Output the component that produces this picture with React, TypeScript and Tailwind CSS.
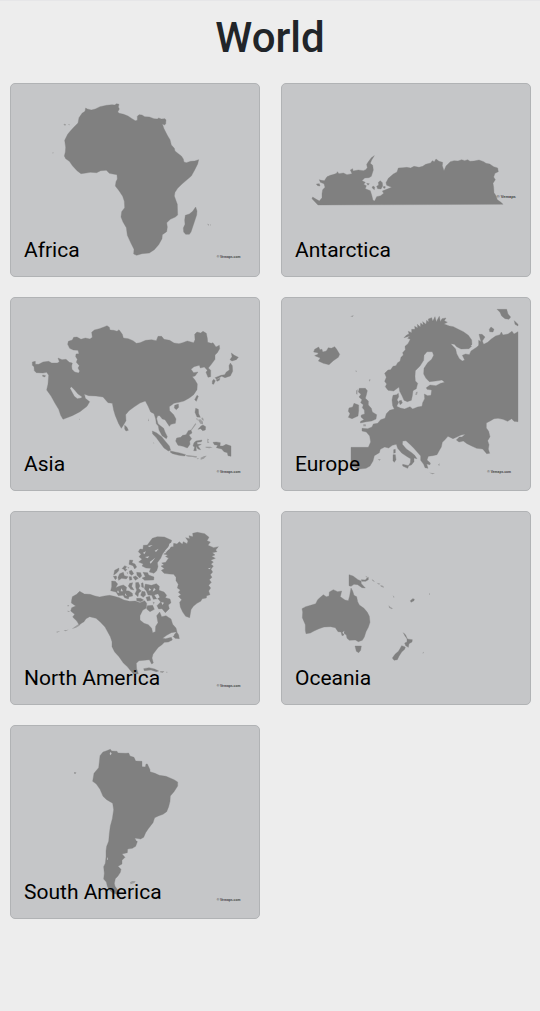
type Region = {
  name: string;
  slug: string;
  viewBox: string;
  land: string;
  faint?: string;
  water?: string;
  credit?: { x: number; y: number; text: string };
};

const leftBox = "9 12 744 576";
const rightBox = "12 12 744 576";
const cornerCredit = { x: 626, y: 536, text: "© Vemaps.com" };

const regions: Region[] = [
  {
    name: "Africa",
    slug: "africa",
    viewBox: leftBox,
    credit: { x: 626, y: 535, text: "© Vemaps.com" },
    land:
      "M233 84L238 87L250 90L262 87L276 80L296 76L312 74L320 75L326 71L333 73L331 81L334 87L329 96L334 100L347 103L360 108L372 116L382 122L388 121L388 109L393 104L402 105L410 110L424 111L438 116L448 117L452 114L460 117L471 116L474 120L473 132L469 135L463 131L468 146L478 166L486 179L490 195L499 205L501 213L511 221L520 228L526 237L528 246L535 248L548 244L560 243L572 239L569 252L560 270L550 288L535 301L522 312L509 325L501 337L499 348L503 359L508 373L509 405L502 411L487 418L476 428L478 441L476 455L463 464L462 476L452 494L439 509L424 519L402 521L386 526L377 522L378 508L369 490L358 466L355 443L345 426L339 411L341 395L350 383L349 364L344 349L333 332L322 318L324 305L328 297L327 284L315 282L304 280L295 271L278 272L266 278L247 277L234 279L219 281L207 272L194 258L184 244L173 236L169 228L172 216L173 202L170 181L179 163L187 153L198 141L210 129L213 113L222 100L231 94Z M563 381L567 393L566 405L561 420L555 438L549 456L544 463L533 463L527 456L526 444L531 433L530 420L532 406L544 402L554 394Z",
    faint:
      "M168 131L174 133L172 137L167 135Z M180 134L184 132L185 136Z M598 431L603 433L601 438Z M606 433L609 434L608 438Z M134 216L137 218L134 221Z",
  },
  {
    name: "Antarctica",
    slug: "antarctica",
    viewBox: rightBox,
    credit: { x: 656, y: 354, text: "© Vemaps" },
    land:
      "M120 375L112 367L102 356L104 351L115 358L124 363L132 353L132 341L134 329L141 322L138 311L127 307L124 299L130 301L139 302L147 290L157 286L168 283L176 280L178 275L183 281L196 279L207 284L222 281L217 270L224 266L225 273L241 270L256 272L263 269L268 263L266 253L272 244L280 233L289 227L281 240L277 250L284 256L286 270L280 289L273 293L260 294L252 302L262 307L257 313L265 317L262 326L277 332L281 345L285 361L290 363L296 350L308 347L317 340L313 333L326 328L341 322L326 316L324 308L331 295L346 282L357 276L361 264L375 263L386 262L398 264L408 259L423 262L434 259L443 253L458 249L463 242L469 245L474 237L483 244L494 247L493 257L498 272L504 258L517 245L528 242L540 243L551 239L560 242L569 239L576 244L588 243L603 240L617 245L624 250L635 252L647 260L659 264L661 275L651 280L647 291L652 299L645 310L647 322L648 338L654 347L658 359L669 367L675 373Z M301 307L307 302L313 308L314 318L309 327L299 326L296 319L302 315Z M115 312L124 311L126 318L119 317Z M285 318L290 321L289 329L282 323Z M266 310L274 311L270 316Z M317 319L322 320L321 325L316 324Z",
    water: "M268 319L276 317L280 328L272 327Z M276 301L281 301L280 307Z",
  },
  {
    name: "Asia",
    slug: "asia",
    viewBox: leftBox,
    credit: cornerCredit,
    land:
      "M73 204L82 202L82 211L92 211L105 204L122 202L131 207L148 207L154 203L150 192L162 197L174 196L184 205L193 207L191 216L192 226L200 234L212 237L215 231L210 222L214 215L205 205L208 196L203 188L204 180L213 179L210 169L196 168L185 163L179 151L181 142L193 138L197 130L207 129L219 136L232 132L246 135L253 130L251 115L259 108L274 104L288 99L297 95L304 100L306 108L317 109L327 112L333 107L343 121L346 132L361 134L375 140L385 148L396 146L413 139L431 137L445 140L450 127L461 127L468 136L485 139L498 147L513 149L524 146L538 141L557 146L561 137L560 121L567 114L578 117L585 112L595 118L598 133L599 145L610 148L615 146L624 159L634 154L635 164L628 176L621 183L621 196L610 211L601 222L608 229L608 248L600 250L594 235L598 229L589 219L577 222L574 214L558 218L549 226L557 236L570 234L561 246L553 248L561 258L568 270L567 287L557 302L544 312L528 321L513 325L498 328L484 338L485 350L497 362L504 375L502 388L489 391L484 397L479 389L471 377L463 375L455 365L449 365L446 374L450 389L458 396L467 403L471 414L478 428L475 434L462 425L453 408L451 396L445 389L443 375L438 359L428 354L420 336L412 321L396 327L378 339L363 350L353 362L354 380L347 392L340 403L332 389L322 365L317 349L313 328L300 326L285 309L264 306L242 305L230 301L224 310L210 300L199 287L190 278L186 283L194 298L199 307L208 314L219 312L230 303L232 313L245 323L237 337L216 353L193 365L165 376L158 364L152 346L141 328L129 306L116 288L120 270L122 244L116 235L105 237L85 236L79 230L78 218L73 214Z M350 394L357 400L361 409L354 411L350 405Z M104 243L113 245L110 249L104 247Z M670 177L679 184L691 190L685 197L672 201L666 197L672 188Z M667 207L673 215L674 232L667 246L651 251L641 247L626 256L621 251L639 244L650 242L655 234L664 228L663 215Z M617 256L622 260L617 271L613 270L613 261Z M625 257L636 253L634 259L627 262Z M567 304L571 307L565 322L560 317Z M500 334L511 330L512 340L505 347L499 342Z M563 343L571 346L572 359L577 370L567 369L561 355Z M585 393L593 398L592 408L584 410L578 404L570 406L579 396Z M549 408L552 417L543 423L551 434L545 442L546 451L538 462L525 457L510 454L503 441L506 432L518 430L524 424L534 422L541 410Z M433 411L445 416L461 428L473 443L484 456L488 469L481 471L468 462L456 446L444 430L434 420Z M488 471L501 474L512 476L523 479L533 482L530 486L513 484L494 479L487 475Z M558 446L564 441L582 438L580 443L567 445L568 451L580 451L570 456L578 467L570 465L564 457L565 470L557 470L560 459L555 456Z M615 445L625 444L637 446L636 456L645 456L654 451L669 456L669 487L660 485L658 476L648 473L641 465L625 461L629 454L619 452Z",
    faint:
      "M570 377L577 376L585 383L585 391L577 389Z M562 388L565 390L551 409L549 407Z M582 370L587 375L586 381L580 375Z M564 373L569 374L568 380Z M535 483L544 484L555 485L567 487L565 491L554 489L541 488L534 486Z M578 491L589 486L596 485L587 494L578 497Z M566 492L574 494L569 496Z M598 434L603 436L600 441L604 446L598 447Z M593 458L607 458L614 460L604 463L593 461Z M213 374L216 375L214 378Z M421 373L423 380L420 382Z M435 443L439 449L436 448Z",
  },
  {
    name: "Europe",
    slug: "europe",
    viewBox: rightBox,
    credit: { x: 628, y: 536, text: "© Vemaps.com" },
    land:
      "M720 113L720 383L708 382L701 374L689 382L675 376L660 373L648 374L638 380L625 387L625 402L632 412L636 428L629 440L633 452L631 465L635 478L626 479L614 465L596 463L581 456L567 449L556 441L543 444L535 438L544 429L552 429L562 421L549 423L535 430L525 434L510 427L500 438L493 445L490 459L483 471L477 482L464 485L451 487L447 498L457 507L456 512L446 510L450 523L441 521L437 511L428 499L428 486L421 478L407 462L394 449L384 440L374 441L373 451L385 465L401 476L410 484L417 494L408 492L408 503L400 513L391 515L397 506L398 494L389 489L371 477L359 463L355 451L343 454L332 462L320 459L307 466L304 476L289 485L285 501L276 516L264 523L244 525L219 516L219 460L271 460L278 444L275 426L265 414L252 411L252 403L269 404L282 399L286 390L299 388L308 377L321 373L325 359L335 349L349 345L344 335L342 318L345 304L356 302L361 298L362 308L357 318L362 325L356 337L367 342L380 345L396 338L404 345L419 339L432 337L434 326L440 314L439 300L449 305L459 304L461 288L447 286L445 281L456 273L474 275L488 268L500 265L492 258L473 261L454 263L444 253L437 240L438 223L449 206L461 196L467 184L463 173L447 173L438 184L437 199L426 216L412 230L411 247L412 261L419 268L415 284L405 290L403 305L400 319L388 323L378 319L372 305L365 292L363 279L347 291L330 289L322 278L326 270L320 262L325 250L320 238L330 228L338 227L345 217L354 215L359 206L366 202L369 190L376 183L374 176L382 167L381 157L390 149L397 136L389 133L396 126L378 131L386 123L393 120L391 112L401 116L401 106L411 106L410 97L419 102L418 91L427 99L428 87L436 94L434 83L444 91L446 79L452 85L451 75L461 71L464 82L471 68L475 84L479 76L484 67L487 83L492 74L504 72L499 80L508 85L498 90L514 96L526 98L541 106L556 113L571 124L581 138L582 155L573 164L549 165L536 158L529 151L518 149L533 165L536 179L544 194L553 201L560 198L553 184L563 180L574 182L579 171L597 159L602 154L602 139L609 143L603 121L612 121L621 129L613 141L617 151L629 145L640 135L653 126L666 122L670 114L675 123L690 120L702 112L708 120Z M110 166L122 159L126 167L132 166L134 174L145 171L151 161L160 163L170 158L176 166L185 181L181 190L166 200L153 212L136 208L121 201L127 192L110 185L121 180L119 176L107 174Z M244 283L262 283L268 290L265 303L262 313L271 321L271 333L280 343L283 354L296 362L294 375L281 381L265 383L247 387L248 382L258 377L249 369L250 363L260 360L259 348L253 341L256 332L248 326L252 317L243 309L249 301L241 294Z M228 328L242 333L242 350L240 366L222 374L211 370L216 359L211 352L213 342L224 339Z M657 46L686 46L690 60L698 69L693 76L681 74L671 66L666 55Z M709 80L720 91L720 96L711 91Z M639 99L648 106L645 114L635 113L634 106Z M347 467L352 466L352 476L347 478Z M345 482L352 482L354 497L349 505L345 500Z M374 511L392 515L389 523L374 516Z M363 321L370 319L373 327L366 332Z",
    faint:
      "M217 67L227 64L224 69Z M231 230L236 230L236 235Z M272 258L277 255L276 263Z M234 290L239 286L238 302L234 299Z M299 496L308 495L305 500Z M454 536L471 538L464 541Z M414 294L419 293L417 302L412 303Z M480 512L485 508L484 516Z M256 391L263 391L264 397L256 397Z",
    water: "M444 292L450 291L449 298L444 297Z M590 138L601 149L590 158L578 155L585 150Z",
  },
  {
    name: "North America",
    slug: "north-america",
    viewBox: leftBox,
    credit: cornerCredit,
    land:
      "M191 276L193 266L206 259L215 250L229 258L246 259L261 264L275 267L289 264L305 262L319 265L334 269L348 276L365 280L382 279L396 284L410 278L416 286L415 300L404 307L396 323L396 336L408 346L421 350L431 361L434 374L442 371L443 355L450 344L446 323L455 312L461 326L474 323L489 333L494 349L504 360L507 371L490 374L476 382L464 391L473 392L490 388L493 396L481 402L469 403L461 411L451 418L443 428L435 439L432 450L436 465L431 468L424 455L409 457L393 458L385 466L386 482L391 497L377 499L366 486L359 477L346 465L333 446L320 432L312 416L312 401L307 386L298 370L291 357L276 341L264 331L245 326L234 332L228 341L213 350L207 340L194 327L200 319L188 309L191 299L203 294L190 285Z M506 371L512 381L514 392L501 391L495 385Z M631 116L623 126L627 131L613 134L621 141L611 145L622 151L608 157L616 162L609 169L616 174L609 184L614 192L607 200L612 208L604 215L610 223L602 232L608 240L602 249L606 260L596 263L595 270L583 272L578 280L567 286L556 295L549 305L545 329L533 325L524 312L517 297L515 283L521 275L511 265L519 260L511 253L517 246L508 240L511 229L504 218L504 208L497 199L484 198L468 196L460 187L469 182L459 174L468 171L461 165L473 163L482 150L472 147L479 141L467 138L475 135L473 128L484 124L488 117L496 116L497 106L507 108L514 101L523 109L526 101L537 107L540 99L533 89L545 92L543 83L555 86L554 76L568 73L590 77L603 88L597 98L607 102L600 112L617 119Z M491 97L488 109L475 123L464 137L458 151L448 164L450 176L446 188L438 196L424 192L428 181L414 180L402 174L406 168L392 162L402 154L393 146L399 139L391 131L396 123L405 124L406 112L418 111L423 104L433 91L448 86L469 87Z M365 156L375 157L372 164L381 168L386 177L380 183L375 173L363 169Z M350 173L356 176L351 184L342 182Z M320 187L333 180L332 188L325 196L317 201Z M316 205L325 204L326 211L322 215Z M335 197L346 193L349 203L360 206L355 213L341 211L332 217L330 208Z M347 184L357 184L352 190Z M364 189L371 187L377 197L371 202L365 197Z M375 207L383 204L391 211L382 217Z M386 193L398 194L401 204L395 210L387 202Z M363 206L370 206L372 215L365 217Z M405 193L419 194L422 201L438 207L437 216L410 217L402 210L412 206Z M311 219L322 220L329 228L323 239L335 234L346 231L356 238L354 248L363 249L373 256L374 264L363 266L361 273L350 269L345 262L331 263L324 252L308 248L311 236Z M365 226L374 224L371 235L378 246L368 244L361 234Z M383 224L391 223L396 234L392 241L400 249L392 255L390 266L381 258L386 247L383 237Z M400 226L405 224L407 239L401 237Z M412 228L430 232L445 227L454 235L453 247L468 252L476 262L472 269L486 273L489 284L481 291L484 302L472 314L462 302L452 303L447 293L458 282L450 272L436 274L431 262L420 261L415 249L409 242Z M402 250L411 251L413 261L406 268L398 262Z M414 268L425 265L428 277L418 279Z M386 271L398 271L407 276L398 281L386 278Z M418 293L434 292L439 304L426 311L416 303Z M407 482L423 479L440 483L452 489L445 491L429 486L409 488Z",
    faint:
      "M434 281L440 283L437 290Z M457 489L469 489L464 495L456 493Z M474 491L480 492L475 494Z M211 349L222 343L214 353L204 359L191 363L202 355Z M145 371L157 369L147 374Z M167 367L182 365L172 370Z M178 308L187 310L180 312Z M178 291L184 292L180 296Z M358 176L364 178L361 182Z M356 192L361 194L358 199Z",
    water:
      "M484 107L499 98L486 120L474 133L471 128L481 119Z M419 114L434 111L425 117Z M411 147L424 145L419 151Z M425 162L442 149L428 167Z M405 134L414 130L409 139Z M440 128L452 122L444 132Z M330 247L334 255L327 253Z M340 241L345 250L338 250Z M351 256L357 264L351 262Z M480 382L494 376L499 382L487 388Z M424 240L430 246L422 248Z M438 239L443 245L434 251Z M439 261L450 258L455 268L447 273Z M480 328L485 314L488 323Z M600 181L609 179L604 184Z M466 147L478 147L469 153Z M460 282L468 284L463 291Z",
  },
  {
    name: "Oceania",
    slug: "oceania",
    viewBox: rightBox,
    land:
      "M219 240L224 249L228 262L236 266L239 281L244 291L258 301L268 313L274 325L276 343L271 358L264 371L259 387L253 397L241 401L232 396L214 397L207 391L205 381L196 374L198 381L192 383L189 372L180 371L172 359L158 356L138 357L123 362L108 369L97 375L84 377L82 367L82 350L73 329L74 312L72 302L83 296L98 292L113 287L119 275L127 268L136 260L145 266L153 264L154 252L166 245L179 251L191 249L187 266L201 276L211 278L215 263Z M213 200L225 204L240 215L249 219L250 227L262 240L252 239L239 230L228 229L219 235L213 233Z M250 215L262 216L267 210L271 208L271 215L263 220L251 220Z M397 278L404 272L409 273L408 278L399 283Z M231 414L250 414L248 427L242 434L235 430Z M376 374L383 381L388 393L403 395L402 402L393 407L391 418L383 413L380 405L387 402L387 392L381 384Z M371 413L382 417L380 424L371 432L363 445L358 455L348 457L343 450L351 439L362 429Z",
    faint:
      "M281 214L286 216L291 222L284 219Z M296 224L307 227L303 230Z M307 231L316 234L318 239L309 236Z M344 262L349 266L348 271Z M332 292L337 297L344 301L342 304L333 299Z M453 255L456 258L453 262Z M435 431L438 434L434 437Z M262 203L268 206L266 209Z",
    water: "M193 374L199 368L197 379Z",
  },
  {
    name: "South America",
    slug: "south-america",
    viewBox: leftBox,
    credit: cornerCredit,
    land:
      "M276 101L285 90L294 87L307 82L311 87L327 88L330 93L354 94L362 93L366 102L378 106L383 117L402 118L402 134L412 135L414 126L418 126L426 143L426 149L441 154L454 160L474 163L498 173L509 180L509 192L498 209L487 222L486 238L482 254L476 269L465 277L451 282L440 287L435 302L421 320L413 332L407 346L398 351L380 348L388 359L383 373L373 379L359 381L358 392L342 396L351 406L342 415L342 426L330 433L339 442L337 451L330 462L322 470L319 484L321 493L334 511L328 517L315 514L305 505L298 493L295 480L287 471L289 454L287 434L292 424L294 405L294 387L296 373L302 358L304 335L307 312L313 290L317 263L314 244L296 233L285 223L276 202L265 186L254 178L258 154L272 137L274 120Z",
    faint:
      "M366 481L373 477L383 478L379 483L368 487Z M198 150L205 151L203 156L198 155Z",
    water: "M307 90L311 94L308 100L305 96Z M382 353L387 351L387 357Z M297 405L300 412L297 414Z",
  },
];

function RegionCard({ region }: { region: Region }) {
  return (
    <a
      href={`#${region.slug}`}
      className="relative block overflow-hidden rounded-[5px] border border-[#b1b3b5] bg-[#c5c6c8]"
    >
      <svg viewBox={region.viewBox} className="block w-full" aria-hidden="true">
        <path
          d={region.land}
          fill="#808080"
          stroke="#808080"
          strokeWidth="1"
          strokeLinejoin="round"
        />
        {region.faint && <path d={region.faint} fill="#808080" fillOpacity="0.6" />}
        {region.water && <path d={region.water} fill="#c5c6c8" />}
        {region.credit && (
          <text
            x={region.credit.x}
            y={region.credit.y}
            fontSize={region.slug === "antarctica" ? 12 : 10}
            fontWeight="700"
            fill="#404040"
            fontFamily="Liberation Sans, sans-serif"
          >
            {region.credit.text}
          </text>
        )}
      </svg>
      <span className="absolute bottom-[13px] left-[13px] text-[21px] leading-[26px] text-black">
        {region.name}
      </span>
    </a>
  );
}

export default function App() {
  return (
    <main className="min-h-screen border-t border-[#e6e6e8] bg-[#ededed] pb-5 font-[Roboto,sans-serif]">
      <h1 className="pt-3 text-center text-[42px] leading-[50px] font-medium text-[#212529]">
        World
      </h1>
      <ul className="mt-5 grid grid-cols-2 gap-x-[21px] gap-y-5 pr-[9px] pl-[10px]">
        {regions.map((region) => (
          <li key={region.slug}>
            <RegionCard region={region} />
          </li>
        ))}
      </ul>
    </main>
  );
}
